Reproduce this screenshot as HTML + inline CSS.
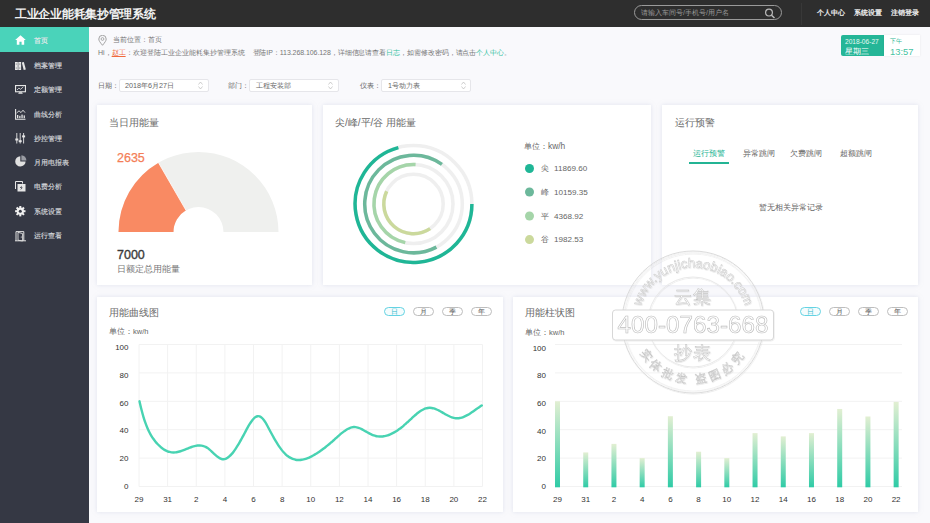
<!DOCTYPE html>
<html><head><meta charset="utf-8">
<style>
*{margin:0;padding:0;box-sizing:border-box}
html,body{width:930px;height:523px;overflow:hidden;background:#f9f9fc;font-family:"Liberation Sans",sans-serif;}
.a{position:absolute;white-space:nowrap}
#hdr{position:absolute;left:0;top:0;width:930px;height:27px;background:#2e2e2e}
#side{position:absolute;left:0;top:27px;width:89px;height:496px;background:#353844}
.card{position:absolute;background:#fff;box-shadow:0 0 4px rgba(200,205,225,0.5)}
.nav{position:absolute;left:0;width:89px;height:24px}
.nav .t{position:absolute;left:34px;top:1px;line-height:24px;font-size:7.2px;color:#d4d6da;-webkit-text-stroke:0.15px #d4d6da}
.nav svg{position:absolute;left:15px;top:7px}
</style></head><body>
<div id="hdr">
  <div class="a" style="left:15px;top:7px;font-size:12px;font-weight:bold;color:#f2f2f2;line-height:14px;letter-spacing:-0.3px">工业企业能耗集抄管理系统</div>
  <div class="a" style="left:634px;top:5px;width:148px;height:15px;border:1px solid #9a9a9a;border-radius:8px"></div>
  <div class="a" style="left:641px;top:7px;font-size:7px;line-height:11px;color:#9a9a9a">请输入车间号/手机号/用户名</div>
  <svg class="a" style="left:764px;top:8px" width="12" height="11" viewBox="0 0 12 11"><circle cx="5" cy="4.6" r="3.4" fill="none" stroke="#bbb" stroke-width="1.2"/><path d="M7.5 7.2 L10.5 10" stroke="#bbb" stroke-width="1.5"/></svg>
  <div class="a" style="left:801px;top:3px;width:1px;height:22px;background:#383838"></div>
  <div class="a" style="left:816.5px;top:7px;font-size:7.2px;line-height:12px;color:#f4f4f4;-webkit-text-stroke:0.25px #f4f4f4">个人中心</div>
  <div class="a" style="left:853.5px;top:7px;font-size:7.2px;line-height:12px;color:#f4f4f4;-webkit-text-stroke:0.25px #f4f4f4">系统设置</div>
  <div class="a" style="left:890.5px;top:7px;font-size:7.2px;line-height:12px;color:#f4f4f4;-webkit-text-stroke:0.25px #f4f4f4">注销登录</div>
</div>
<div id="side">
  <div class="nav" style="top:0;height:25px;background:#4ad3ba"><svg style="left:15px;top:8px" width="11" height="10" viewBox="0 0 11 10"><path d="M5.5 0.3 L10.8 5 L9.2 5 L9.2 9.8 L6.6 9.8 L6.6 6.8 L4.4 6.8 L4.4 9.8 L1.8 9.8 L1.8 5 L0.2 5 Z" fill="#fff"/></svg><div class="t" style="top:1px;line-height:25px;color:#fff">首页</div></div>
  <div class="nav" style="top:26px"><svg style="top:8.5px" width="11" height="8" viewBox="0 0 11 8"><rect x="0" y="0" width="2.8" height="8" fill="#e6e6e6"/><rect x="3.3" y="0" width="2.8" height="8" fill="#e6e6e6"/><path d="M6.8 0.5 L8.9 0 L10.8 7.4 L8.7 8 Z" fill="#e6e6e6"/><rect x="0.7" y="1.6" width="1.4" height="0.9" fill="#8a8c92"/><rect x="4" y="1.6" width="1.4" height="0.9" fill="#8a8c92"/><rect x="0.7" y="5.6" width="1.4" height="0.9" fill="#8a8c92"/><rect x="4" y="5.6" width="1.4" height="0.9" fill="#8a8c92"/></svg><div class="t">档案管理</div></div>
  <div class="nav" style="top:50px"><svg style="top:8px" width="11" height="9" viewBox="0 0 11 9"><rect x="0.55" y="0.55" width="9.9" height="6.2" fill="none" stroke="#e6e6e6" stroke-width="1.1"/><path d="M2 5 L3.9 3.1 L5.6 4.3 L8.4 1.8" fill="none" stroke="#e6e6e6" stroke-width="0.8"/><path d="M3.2 8.8 L7.8 8.8 L7 7.2 L4 7.2 Z" fill="#e6e6e6"/></svg><div class="t">定额管理</div></div>
  <div class="nav" style="top:75px"><svg style="top:7px" width="11" height="11" viewBox="0 0 11 11"><path d="M0.6 0 L0.6 10.3 L10.5 10.3" fill="none" stroke="#e6e6e6" stroke-width="1.1"/><path d="M1.6 4 L4 1.8 L6 3.6 L8 1.2 L10 3.6" fill="none" stroke="#e6e6e6" stroke-width="0.9"/><rect x="2" y="6" width="1.3" height="3.2" fill="#e6e6e6"/><rect x="4.2" y="6.8" width="1.3" height="2.4" fill="#e6e6e6"/><rect x="6.4" y="5.6" width="1.3" height="3.6" fill="#e6e6e6"/><rect x="8.6" y="6.4" width="1.3" height="2.8" fill="#e6e6e6"/></svg><div class="t">曲线分析</div></div>
  <div class="nav" style="top:99px"><svg style="top:7px" width="11" height="11" viewBox="0 0 11 11"><path d="M1.8 0 V10.5 M5.2 0 V10.5 M8.6 0 V10.5" stroke="#e6e6e6" stroke-width="0.9"/><rect x="0.3" y="5.5" width="3" height="2" fill="#e6e6e6"/><rect x="3.7" y="7.2" width="3" height="2" fill="#e6e6e6"/><rect x="7.1" y="2.4" width="3" height="2" fill="#e6e6e6"/></svg><div class="t">抄控管理</div></div>
  <div class="nav" style="top:123px"><svg style="top:5px" width="12" height="13" viewBox="0 0 12 13"><path d="M5.3 1.2 A5.2 5.2 0 1 0 10.6 6.5 L5.3 6.5 Z" fill="#e0e0e0"/><path d="M6.4 0.2 A5.2 5.2 0 0 1 11.4 5.4 L6.4 5.4 Z" fill="#9a9ca3"/></svg><div class="t">月用电报表</div></div>
  <div class="nav" style="top:147px"><svg style="top:7px" width="11" height="11" viewBox="0 0 11 11"><path d="M0.5 8 V0.5 H7.5 V2.5" fill="none" stroke="#e6e6e6" stroke-width="1"/><rect x="2.5" y="3" width="8" height="7.5" fill="#e6e6e6"/><path d="M7 4.5 L4.8 7 L6.3 7 L5.3 9.3 L7.8 6.4 L6.3 6.4 Z" fill="#353844"/></svg><div class="t">电费分析</div></div>
  <div class="nav" style="top:172px"><svg style="top:7px" width="11" height="11" viewBox="0 0 11 11"><g fill="#f0f0f0"><circle cx="5.3" cy="5.2" r="3.6"/><g id="teeth"><rect x="4.3" y="0" width="2" height="10.4"/><rect x="4.3" y="0" width="2" height="10.4" transform="rotate(45 5.3 5.2)"/><rect x="4.3" y="0" width="2" height="10.4" transform="rotate(90 5.3 5.2)"/><rect x="4.3" y="0" width="2" height="10.4" transform="rotate(135 5.3 5.2)"/></g></g><circle cx="5.3" cy="5.2" r="1.5" fill="#353844"/></svg><div class="t">系统设置</div></div>
  <div class="nav" style="top:196px"><svg style="top:8px" width="12" height="11" viewBox="0 0 12 11"><path d="M1 9.8 V0.6 H8.8 V9.8 M0 9.8 H11" fill="none" stroke="#e0e0e0" stroke-width="1"/><path d="M3 1.3 L7.6 2.6 V10 L3 9.2 Z" fill="none" stroke="#e0e0e0" stroke-width="0.9"/><circle cx="6.3" cy="6" r="0.6" fill="#e0e0e0"/></svg><div class="t">运行查看</div></div>
</div>

<!-- breadcrumb -->
<svg class="a" style="left:97.5px;top:34.5px" width="9" height="11" viewBox="0 0 9 11"><path d="M4.5 10.3 C2 7.3 0.8 5.6 0.8 4 A3.7 3.7 0 0 1 8.2 4 C8.2 5.6 7 7.3 4.5 10.3 Z" fill="none" stroke="#999" stroke-width="0.9"/><circle cx="4.5" cy="4" r="1.4" fill="none" stroke="#999" stroke-width="0.8"/></svg>
<div class="a" style="left:113px;top:35px;font-size:7px;line-height:10px;color:#777">当前位置：首页</div>
<div id="w1" class="a" style="left:98px;top:48px;font-size:7px;line-height:10px;color:#777">Hi，<span style="color:#f06a3c;text-decoration:underline">赵工</span>：欢迎登陆工业企业能耗集抄管理系统</div>
<div id="w2" class="a" style="left:252.5px;top:48px;letter-spacing:-0.07px;font-size:7px;line-height:10px;color:#777">登陆IP：113.268.106.128，详细信息请查看<span style="color:#2fc0a0">日志</span>，如需修改密码，请点击<span style="color:#2fc0a0">个人中心</span>。</div>
<!-- date widget -->
<div class="a" style="left:841px;top:35px;width:43px;height:21px;background:#25b697;border-radius:2px 0 0 2px"></div>
<div class="a" style="left:884px;top:35px;width:36px;height:21px;background:#fff;box-shadow:0 0 2px rgba(0,0,0,0.08)"></div>
<div class="a" style="left:845px;top:37px;font-size:6.6px;line-height:9px;color:#e8f8f3">2018-06-27</div>
<div class="a" style="left:845px;top:45px;font-size:8.4px;line-height:12px;color:#fff">星期三</div>
<div class="a" style="left:890px;top:37px;font-size:6px;line-height:9px;color:#2fb896">下午</div>
<div class="a" style="left:890px;top:45.5px;font-size:9.4px;line-height:12px;color:#45c2a3">13:57</div>
<!-- filters -->
<div class="a" style="left:98px;top:80px;font-size:7px;line-height:11px;color:#666">日期：</div>
<div class="a" style="left:119px;top:79px;width:90px;height:13px;background:#fff;border:1px solid #e6e6ea;border-radius:2px"></div>
<div class="a" style="left:125px;top:80px;font-size:7.2px;line-height:11px;color:#666">2018年6月27日</div>
<div class="a" style="left:228px;top:80px;font-size:7px;line-height:11px;color:#666">部门：</div>
<div class="a" style="left:249px;top:79px;width:90px;height:13px;background:#fff;border:1px solid #e6e6ea;border-radius:2px"></div>
<div class="a" style="left:256px;top:80px;font-size:7.2px;line-height:11px;color:#666">工程安装部</div>
<div class="a" style="left:360px;top:80px;font-size:7px;line-height:11px;color:#666">仪表：</div>
<div class="a" style="left:381px;top:79px;width:90px;height:13px;background:#fff;border:1px solid #e6e6ea;border-radius:2px"></div>
<div class="a" style="left:388px;top:80px;font-size:7.2px;line-height:11px;color:#666">1号动力表</div>
<svg class="a" style="left:198px;top:81px" width="5" height="9" viewBox="0 0 5 9"><path d="M0.5 3.5 L2.5 1 L4.5 3.5 M0.5 5.5 L2.5 8 L4.5 5.5" fill="none" stroke="#bbb" stroke-width="0.7"/></svg>
<svg class="a" style="left:328px;top:81px" width="5" height="9" viewBox="0 0 5 9"><path d="M0.5 3.5 L2.5 1 L4.5 3.5 M0.5 5.5 L2.5 8 L4.5 5.5" fill="none" stroke="#bbb" stroke-width="0.7"/></svg>
<svg class="a" style="left:461px;top:81px" width="5" height="9" viewBox="0 0 5 9"><path d="M0.5 3.5 L2.5 1 L4.5 3.5 M0.5 5.5 L2.5 8 L4.5 5.5" fill="none" stroke="#bbb" stroke-width="0.7"/></svg>
<!-- cards -->
<div class="card" style="left:97px;top:105px;width:215px;height:180px"></div>
<div class="card" style="left:323px;top:105px;width:328px;height:180px"></div>
<div class="card" style="left:662px;top:105px;width:256px;height:180px"></div>
<div class="card" style="left:97px;top:297px;width:406px;height:215px"></div>
<div class="card" style="left:513px;top:297px;width:405px;height:215px"></div>
<!--TEXT-->
<div class="a" style="left:109px;top:116px;font-size:10px;line-height:14px;color:#6a6a6a">当日用能量</div>
<div class="a" style="left:117px;top:150px;font-size:12.5px;line-height:16px;color:#f47e57;-webkit-text-stroke:0.25px #f47e57">2635</div>
<div class="a" style="left:117px;top:248px;font-size:12.5px;line-height:15px;color:#3a3a3a;-webkit-text-stroke:0.35px #3a3a3a">7000</div>
<div class="a" style="left:117px;top:263px;font-size:9px;line-height:12px;color:#777">日额定总用能量</div>
<div class="a" style="left:335px;top:116px;font-size:10px;line-height:14px;color:#6a6a6a">尖/峰/平/谷 用能量</div>
<div class="a" style="left:524px;top:141px;font-size:8.4px;line-height:11px;color:#666">单位：kw/h</div>
<div class="a" style="left:540.5px;top:163px;font-size:8.4px;line-height:11px;color:#666">尖</div><div class="a" style="left:554px;top:163px;font-size:8.1px;line-height:11px;color:#666">11869.60</div>
<div class="a" style="left:540.5px;top:187px;font-size:8.4px;line-height:11px;color:#666">峰</div><div class="a" style="left:554px;top:187px;font-size:8.1px;line-height:11px;color:#666">10159.35</div>
<div class="a" style="left:540.5px;top:211px;font-size:8.4px;line-height:11px;color:#666">平</div><div class="a" style="left:554px;top:211px;font-size:8.1px;line-height:11px;color:#666">4368.92</div>
<div class="a" style="left:540.5px;top:234px;font-size:8.4px;line-height:11px;color:#666">谷</div><div class="a" style="left:554px;top:234px;font-size:8.1px;line-height:11px;color:#666">1982.53</div>
<div class="a" style="left:675px;top:116px;font-size:10px;line-height:14px;color:#6a6a6a">运行预警</div>
<div class="a" style="left:693px;top:148px;font-size:8px;line-height:11px;color:#23b494">运行预警</div>
<div class="a" style="left:689px;top:162px;width:40px;height:2px;background:#23b494"></div>
<div class="a" style="left:743px;top:148px;font-size:8px;line-height:11px;color:#666">异常跳闸</div>
<div class="a" style="left:790px;top:148px;font-size:8px;line-height:11px;color:#666">欠费跳闸</div>
<div class="a" style="left:840px;top:148px;font-size:8px;line-height:11px;color:#666">超额跳闸</div>
<div class="a" style="left:759px;top:202px;font-size:8px;line-height:11px;color:#666">暂无相关异常记录</div>
<div class="a" style="left:109px;top:306px;font-size:10px;line-height:14px;color:#6a6a6a">用能曲线图</div>
<div class="a" style="left:109px;top:327px;font-size:7.5px;line-height:10px;color:#666">单位：kw/h</div>
<div class="a" style="left:525px;top:306px;font-size:10px;line-height:14px;color:#6a6a6a">用能柱状图</div>
<div class="a" style="left:525px;top:328px;font-size:7.5px;line-height:10px;color:#666">单位：kw/h</div>
<div class="a" style="left:384px;top:307px;width:21px;height:9px;border-radius:5px;border:1px solid #64d3e3;color:#30b9cc;background:#f4fcfd;font-size:6.5px;line-height:7.5px;text-align:center">日</div>
<div class="a" style="left:413px;top:307px;width:21px;height:9px;border-radius:5px;border:1px solid #bdbdbd;color:#555;background:#fff;font-size:6.5px;line-height:7.5px;text-align:center">月</div>
<div class="a" style="left:442px;top:307px;width:21px;height:9px;border-radius:5px;border:1px solid #bdbdbd;color:#555;background:#fff;font-size:6.5px;line-height:7.5px;text-align:center">季</div>
<div class="a" style="left:471px;top:307px;width:21px;height:9px;border-radius:5px;border:1px solid #bdbdbd;color:#555;background:#fff;font-size:6.5px;line-height:7.5px;text-align:center">年</div>
<div class="a" style="left:800px;top:307px;width:21px;height:9px;border-radius:5px;border:1px solid #64d3e3;color:#30b9cc;background:#f4fcfd;font-size:6.5px;line-height:7.5px;text-align:center">日</div>
<div class="a" style="left:829px;top:307px;width:21px;height:9px;border-radius:5px;border:1px solid #bdbdbd;color:#555;background:#fff;font-size:6.5px;line-height:7.5px;text-align:center">月</div>
<div class="a" style="left:858px;top:307px;width:21px;height:9px;border-radius:5px;border:1px solid #bdbdbd;color:#555;background:#fff;font-size:6.5px;line-height:7.5px;text-align:center">季</div>
<div class="a" style="left:887px;top:307px;width:21px;height:9px;border-radius:5px;border:1px solid #bdbdbd;color:#555;background:#fff;font-size:6.5px;line-height:7.5px;text-align:center">年</div>
<!--/TEXT-->
<!--CHARTS--><svg class="a" style="left:0;top:0" width="930" height="523" viewBox="0 0 930 523"><defs><linearGradient id="bg" x1="0" y1="1" x2="0" y2="0"><stop offset="0" stop-color="#2fcba6"/><stop offset="1" stop-color="#e2efd2"/></linearGradient></defs><path d="M118.5 232 A80 80 0 0 1 278.5 232 L223.5 232 A25 25 0 0 0 173.5 232 Z" fill="#eff0ee"/><path d="M118.5 232 A80 80 0 0 1 158.50 162.72 L186.00 210.35 A25 25 0 0 0 173.5 232 Z" fill="#f98a63"/><path d="M158.50 162.72 L186.00 210.35" stroke="#fff" stroke-width="0.8"/><circle cx="413.5" cy="204" r="58.4" fill="none" stroke="#efefef" stroke-width="3.5"/><path d="M471.90 204.00 A58.4 58.4 0 1 1 398.38 147.59" fill="none" stroke="#1fb696" stroke-width="3.5"/><circle cx="413.5" cy="204" r="48.8" fill="none" stroke="#efefef" stroke-width="3.5"/><path d="M436.41 247.09 A48.8 48.8 0 1 1 441.91 164.32" fill="none" stroke="#6cb89b" stroke-width="3.5"/><circle cx="413.5" cy="204" r="39.5" fill="none" stroke="#efefef" stroke-width="3.5"/><path d="M405.29 242.64 A39.5 39.5 0 0 1 415.57 164.55" fill="none" stroke="#a5d5a9" stroke-width="3.5"/><circle cx="413.5" cy="204" r="29.7" fill="none" stroke="#efefef" stroke-width="3.5"/><path d="M430.11 228.62 A29.7 29.7 0 0 1 386.69 191.21" fill="none" stroke="#cbd99c" stroke-width="3.5"/><circle cx="529.5" cy="168.5" r="4.5" fill="#1fb696"/><circle cx="529.5" cy="192" r="4.5" fill="#6cb89b"/><circle cx="529.5" cy="216" r="4.5" fill="#a5d5a9"/><circle cx="529.5" cy="239.6" r="4.5" fill="#cbd99c"/><line x1="139.00" y1="344.5" x2="139.00" y2="486.5" stroke="#f2f2f2" stroke-width="1"/><line x1="167.62" y1="344.5" x2="167.62" y2="486.5" stroke="#f2f2f2" stroke-width="1"/><line x1="196.25" y1="344.5" x2="196.25" y2="486.5" stroke="#f2f2f2" stroke-width="1"/><line x1="224.88" y1="344.5" x2="224.88" y2="486.5" stroke="#f2f2f2" stroke-width="1"/><line x1="253.50" y1="344.5" x2="253.50" y2="486.5" stroke="#f2f2f2" stroke-width="1"/><line x1="282.12" y1="344.5" x2="282.12" y2="486.5" stroke="#f2f2f2" stroke-width="1"/><line x1="310.75" y1="344.5" x2="310.75" y2="486.5" stroke="#f2f2f2" stroke-width="1"/><line x1="339.38" y1="344.5" x2="339.38" y2="486.5" stroke="#f2f2f2" stroke-width="1"/><line x1="368.00" y1="344.5" x2="368.00" y2="486.5" stroke="#f2f2f2" stroke-width="1"/><line x1="396.62" y1="344.5" x2="396.62" y2="486.5" stroke="#f2f2f2" stroke-width="1"/><line x1="425.25" y1="344.5" x2="425.25" y2="486.5" stroke="#f2f2f2" stroke-width="1"/><line x1="453.88" y1="344.5" x2="453.88" y2="486.5" stroke="#f2f2f2" stroke-width="1"/><line x1="482.50" y1="344.5" x2="482.50" y2="486.5" stroke="#f2f2f2" stroke-width="1"/><line x1="139.0" y1="344.50" x2="482.5" y2="344.50" stroke="#f2f2f2" stroke-width="1"/><line x1="139.0" y1="372.90" x2="482.5" y2="372.90" stroke="#f2f2f2" stroke-width="1"/><line x1="139.0" y1="401.30" x2="482.5" y2="401.30" stroke="#f2f2f2" stroke-width="1"/><line x1="139.0" y1="429.70" x2="482.5" y2="429.70" stroke="#f2f2f2" stroke-width="1"/><line x1="139.0" y1="458.10" x2="482.5" y2="458.10" stroke="#f2f2f2" stroke-width="1"/><line x1="139.0" y1="486.50" x2="482.5" y2="486.50" stroke="#f2f2f2" stroke-width="1"/><text x="139.00" y="502" font-family="Liberation Sans" font-size="8" fill="#333" text-anchor="middle">29</text><text x="167.62" y="502" font-family="Liberation Sans" font-size="8" fill="#333" text-anchor="middle">31</text><text x="196.25" y="502" font-family="Liberation Sans" font-size="8" fill="#333" text-anchor="middle">2</text><text x="224.88" y="502" font-family="Liberation Sans" font-size="8" fill="#333" text-anchor="middle">4</text><text x="253.50" y="502" font-family="Liberation Sans" font-size="8" fill="#333" text-anchor="middle">6</text><text x="282.12" y="502" font-family="Liberation Sans" font-size="8" fill="#333" text-anchor="middle">8</text><text x="310.75" y="502" font-family="Liberation Sans" font-size="8" fill="#333" text-anchor="middle">10</text><text x="339.38" y="502" font-family="Liberation Sans" font-size="8" fill="#333" text-anchor="middle">12</text><text x="368.00" y="502" font-family="Liberation Sans" font-size="8" fill="#333" text-anchor="middle">14</text><text x="396.62" y="502" font-family="Liberation Sans" font-size="8" fill="#333" text-anchor="middle">16</text><text x="425.25" y="502" font-family="Liberation Sans" font-size="8" fill="#333" text-anchor="middle">18</text><text x="453.88" y="502" font-family="Liberation Sans" font-size="8" fill="#333" text-anchor="middle">20</text><text x="482.50" y="502" font-family="Liberation Sans" font-size="8" fill="#333" text-anchor="middle">22</text><text x="128.5" y="350.30" font-family="Liberation Sans" font-size="8" fill="#333" text-anchor="end">100</text><text x="128.5" y="378.00" font-family="Liberation Sans" font-size="8" fill="#333" text-anchor="end">80</text><text x="128.5" y="405.70" font-family="Liberation Sans" font-size="8" fill="#333" text-anchor="end">60</text><text x="128.5" y="433.40" font-family="Liberation Sans" font-size="8" fill="#333" text-anchor="end">40</text><text x="128.5" y="461.10" font-family="Liberation Sans" font-size="8" fill="#333" text-anchor="end">20</text><text x="128.5" y="488.80" font-family="Liberation Sans" font-size="8" fill="#333" text-anchor="end">0</text><path d="M139.5 401.31 C139.83 402.73 140.83 407.20 141.5 409.82 C142.17 412.44 142.83 414.83 143.5 417.05 C144.17 419.27 144.84 421.27 145.51 423.14 C146.18 425.00 146.84 426.68 147.51 428.24 C148.18 429.80 148.84 431.19 149.51 432.49 C150.18 433.79 150.84 434.96 151.51 436.05 C152.18 437.14 152.84 438.12 153.51 439.06 C154.18 440.00 154.84 440.84 155.51 441.66 C156.18 442.48 156.85 443.24 157.52 443.96 C158.19 444.68 158.85 445.35 159.52 445.97 C160.19 446.60 160.85 447.18 161.52 447.71 C162.19 448.24 162.85 448.72 163.52 449.16 C164.19 449.60 164.85 450.00 165.52 450.35 C166.19 450.70 166.85 451.01 167.52 451.27 C168.19 451.53 168.86 451.75 169.53 451.92 C170.20 452.10 170.86 452.23 171.53 452.32 C172.20 452.41 172.86 452.45 173.53 452.46 C174.20 452.46 174.86 452.42 175.53 452.35 C176.20 452.28 176.86 452.16 177.53 452.02 C178.20 451.88 178.87 451.71 179.54 451.52 C180.21 451.33 180.87 451.11 181.54 450.88 C182.21 450.65 182.87 450.39 183.54 450.14 C184.21 449.88 184.87 449.62 185.54 449.35 C186.21 449.08 186.87 448.80 187.54 448.53 C188.21 448.26 188.87 448.00 189.54 447.74 C190.21 447.49 190.88 447.23 191.55 447.0 C192.22 446.77 192.88 446.56 193.55 446.37 C194.22 446.18 194.88 446.00 195.55 445.87 C196.22 445.74 196.88 445.63 197.55 445.56 C198.22 445.49 198.88 445.45 199.55 445.46 C200.22 445.47 200.88 445.52 201.55 445.62 C202.22 445.72 202.89 445.87 203.56 446.08 C204.23 446.29 204.89 446.55 205.56 446.88 C206.23 447.21 206.89 447.61 207.56 448.06 C208.23 448.51 208.89 449.04 209.56 449.6 C210.23 450.16 210.89 450.78 211.56 451.4 C212.23 452.02 212.89 452.68 213.56 453.3 C214.23 453.93 214.90 454.56 215.57 455.15 C216.24 455.74 216.90 456.32 217.57 456.82 C218.24 457.32 218.90 457.79 219.57 458.16 C220.24 458.53 220.90 458.84 221.57 459.02 C222.24 459.20 222.90 459.29 223.57 459.26 C224.24 459.23 224.91 459.08 225.58 458.84 C226.25 458.60 226.91 458.24 227.58 457.8 C228.25 457.36 228.91 456.83 229.58 456.22 C230.25 455.61 230.91 454.91 231.58 454.15 C232.25 453.39 232.91 452.56 233.58 451.67 C234.25 450.78 234.91 449.83 235.58 448.83 C236.25 447.83 236.92 446.77 237.59 445.69 C238.26 444.61 238.92 443.48 239.59 442.33 C240.26 441.18 240.92 439.98 241.59 438.77 C242.26 437.56 242.92 436.32 243.59 435.08 C244.26 433.84 244.92 432.56 245.59 431.32 C246.26 430.08 246.92 428.82 247.59 427.63 C248.26 426.44 248.93 425.28 249.6 424.2 C250.27 423.12 250.93 422.08 251.6 421.17 C252.27 420.26 252.93 419.41 253.6 418.72 C254.27 418.03 254.93 417.43 255.6 417.01 C256.27 416.59 256.93 416.30 257.6 416.2 C258.27 416.10 258.94 416.19 259.61 416.43 C260.28 416.67 260.94 417.09 261.61 417.65 C262.28 418.21 262.94 418.93 263.61 419.77 C264.28 420.61 264.94 421.62 265.61 422.69 C266.28 423.76 266.94 424.99 267.61 426.21 C268.28 427.43 268.94 428.75 269.61 430.01 C270.28 431.27 270.95 432.56 271.62 433.8 C272.29 435.04 272.95 436.25 273.62 437.44 C274.29 438.62 274.95 439.79 275.62 440.91 C276.29 442.03 276.95 443.12 277.62 444.16 C278.29 445.20 278.95 446.21 279.62 447.16 C280.29 448.11 280.95 449.03 281.62 449.88 C282.29 450.73 282.96 451.52 283.63 452.26 C284.30 453.00 284.96 453.67 285.63 454.29 C286.30 454.91 286.96 455.48 287.63 455.99 C288.30 456.50 288.96 456.96 289.63 457.36 C290.30 457.76 290.96 458.11 291.63 458.42 C292.30 458.73 292.97 458.99 293.64 459.2 C294.31 459.41 294.97 459.58 295.64 459.71 C296.31 459.84 296.97 459.91 297.64 459.96 C298.31 460.01 298.97 460.02 299.64 459.99 C300.31 459.96 300.97 459.89 301.64 459.8 C302.31 459.71 302.97 459.58 303.64 459.42 C304.31 459.26 304.98 459.08 305.65 458.87 C306.32 458.66 306.98 458.41 307.65 458.15 C308.32 457.89 308.98 457.60 309.65 457.29 C310.32 456.98 310.98 456.65 311.65 456.31 C312.32 455.97 312.98 455.61 313.65 455.23 C314.32 454.86 314.98 454.47 315.65 454.06 C316.32 453.65 316.99 453.23 317.66 452.8 C318.33 452.37 318.99 451.92 319.66 451.46 C320.33 451.00 320.99 450.52 321.66 450.04 C322.33 449.56 322.99 449.07 323.66 448.56 C324.33 448.05 324.99 447.53 325.66 447.0 C326.33 446.47 326.99 445.94 327.66 445.39 C328.33 444.84 329.00 444.29 329.67 443.73 C330.34 443.17 331.00 442.59 331.67 442.01 C332.34 441.43 333.00 440.84 333.67 440.25 C334.34 439.66 335.00 439.05 335.67 438.45 C336.34 437.85 337.00 437.24 337.67 436.64 C338.34 436.04 339.01 435.44 339.68 434.86 C340.35 434.28 341.01 433.72 341.68 433.17 C342.35 432.62 343.01 432.09 343.68 431.59 C344.35 431.09 345.01 430.62 345.68 430.18 C346.35 429.75 347.01 429.34 347.68 428.98 C348.35 428.62 349.01 428.30 349.68 428.03 C350.35 427.76 351.02 427.53 351.69 427.37 C352.36 427.21 353.02 427.09 353.69 427.05 C354.36 427.01 355.02 427.03 355.69 427.11 C356.36 427.19 357.02 427.34 357.69 427.53 C358.36 427.72 359.02 427.97 359.69 428.24 C360.36 428.51 361.02 428.84 361.69 429.17 C362.36 429.50 363.03 429.87 363.7 430.24 C364.37 430.61 365.03 431.00 365.7 431.39 C366.37 431.78 367.03 432.18 367.7 432.56 C368.37 432.94 369.03 433.31 369.7 433.66 C370.37 434.01 371.03 434.35 371.7 434.64 C372.37 434.93 373.04 435.19 373.71 435.41 C374.38 435.63 375.04 435.83 375.71 435.98 C376.38 436.13 377.04 436.25 377.71 436.34 C378.38 436.42 379.04 436.47 379.71 436.49 C380.38 436.51 381.04 436.50 381.71 436.46 C382.38 436.42 383.04 436.34 383.71 436.24 C384.38 436.14 385.05 436.00 385.72 435.84 C386.39 435.68 387.05 435.49 387.72 435.28 C388.39 435.06 389.05 434.82 389.72 434.55 C390.39 434.28 391.05 433.99 391.72 433.67 C392.39 433.35 393.05 433.01 393.72 432.64 C394.39 432.27 395.05 431.88 395.72 431.47 C396.39 431.06 397.06 430.62 397.73 430.17 C398.40 429.72 399.06 429.24 399.73 428.75 C400.40 428.26 401.06 427.74 401.73 427.21 C402.40 426.68 403.06 426.13 403.73 425.56 C404.40 424.99 405.06 424.40 405.73 423.81 C406.40 423.22 407.07 422.60 407.74 421.99 C408.41 421.38 409.07 420.75 409.74 420.13 C410.41 419.51 411.07 418.88 411.74 418.27 C412.41 417.66 413.07 417.04 413.74 416.45 C414.41 415.86 415.07 415.27 415.74 414.71 C416.41 414.15 417.07 413.59 417.74 413.07 C418.41 412.55 419.08 412.06 419.75 411.6 C420.42 411.14 421.08 410.70 421.75 410.31 C422.42 409.92 423.08 409.56 423.75 409.25 C424.42 408.94 425.08 408.66 425.75 408.45 C426.42 408.24 427.08 408.07 427.75 407.96 C428.42 407.85 429.08 407.80 429.75 407.8 C430.42 407.80 431.09 407.87 431.76 407.98 C432.43 408.09 433.09 408.26 433.76 408.45 C434.43 408.64 435.09 408.88 435.76 409.14 C436.43 409.40 437.09 409.71 437.76 410.03 C438.43 410.35 439.09 410.70 439.76 411.05 C440.43 411.40 441.09 411.77 441.76 412.15 C442.43 412.52 443.10 412.92 443.77 413.3 C444.44 413.68 445.10 414.07 445.77 414.44 C446.44 414.81 447.10 415.17 447.77 415.51 C448.44 415.85 449.10 416.18 449.77 416.48 C450.44 416.78 451.10 417.06 451.77 417.29 C452.44 417.53 453.11 417.73 453.78 417.89 C454.45 418.05 455.11 418.17 455.78 418.24 C456.45 418.31 457.11 418.32 457.78 418.29 C458.45 418.26 459.11 418.17 459.78 418.05 C460.45 417.93 461.11 417.76 461.78 417.56 C462.45 417.36 463.11 417.11 463.78 416.84 C464.45 416.57 465.12 416.26 465.79 415.93 C466.46 415.60 467.12 415.24 467.79 414.86 C468.46 414.48 469.12 414.07 469.79 413.65 C470.46 413.23 471.12 412.80 471.79 412.35 C472.46 411.90 473.12 411.44 473.79 410.97 C474.46 410.50 475.12 410.03 475.79 409.56 C476.46 409.09 477.13 408.61 477.8 408.14 C478.47 407.67 479.13 407.20 479.8 406.74 C480.47 406.28 481.47 405.62 481.8 405.4" fill="none" stroke="#48d3b2" stroke-width="2.4" stroke-linecap="round"/><line x1="555" y1="344.50" x2="902" y2="344.50" stroke="#f2f2f2" stroke-width="1"/><line x1="555" y1="372.90" x2="902" y2="372.90" stroke="#f2f2f2" stroke-width="1"/><line x1="555" y1="401.30" x2="902" y2="401.30" stroke="#f2f2f2" stroke-width="1"/><line x1="555" y1="429.70" x2="902" y2="429.70" stroke="#f2f2f2" stroke-width="1"/><line x1="555" y1="458.10" x2="902" y2="458.10" stroke="#f2f2f2" stroke-width="1"/><line x1="555" y1="486.50" x2="902" y2="486.50" stroke="#f2f2f2" stroke-width="1"/><rect x="555.00" y="401.30" width="5" height="86.00" fill="url(#bg)"/><text x="557.50" y="502" font-family="Liberation Sans" font-size="8" fill="#333" text-anchor="middle">29</text><rect x="583.22" y="452.42" width="5" height="34.88" fill="url(#bg)"/><text x="585.72" y="502" font-family="Liberation Sans" font-size="8" fill="#333" text-anchor="middle">31</text><rect x="611.44" y="443.90" width="5" height="43.40" fill="url(#bg)"/><text x="613.94" y="502" font-family="Liberation Sans" font-size="8" fill="#333" text-anchor="middle">2</text><rect x="639.66" y="458.10" width="5" height="29.20" fill="url(#bg)"/><text x="642.16" y="502" font-family="Liberation Sans" font-size="8" fill="#333" text-anchor="middle">4</text><rect x="667.88" y="416.21" width="5" height="71.09" fill="url(#bg)"/><text x="670.38" y="502" font-family="Liberation Sans" font-size="8" fill="#333" text-anchor="middle">6</text><rect x="696.10" y="451.71" width="5" height="35.59" fill="url(#bg)"/><text x="698.60" y="502" font-family="Liberation Sans" font-size="8" fill="#333" text-anchor="middle">8</text><rect x="724.32" y="458.10" width="5" height="29.20" fill="url(#bg)"/><text x="726.82" y="502" font-family="Liberation Sans" font-size="8" fill="#333" text-anchor="middle">10</text><rect x="752.54" y="433.11" width="5" height="54.19" fill="url(#bg)"/><text x="755.04" y="502" font-family="Liberation Sans" font-size="8" fill="#333" text-anchor="middle">12</text><rect x="780.76" y="436.37" width="5" height="50.93" fill="url(#bg)"/><text x="783.26" y="502" font-family="Liberation Sans" font-size="8" fill="#333" text-anchor="middle">14</text><rect x="808.98" y="433.11" width="5" height="54.19" fill="url(#bg)"/><text x="811.48" y="502" font-family="Liberation Sans" font-size="8" fill="#333" text-anchor="middle">16</text><rect x="837.20" y="408.97" width="5" height="78.33" fill="url(#bg)"/><text x="839.70" y="502" font-family="Liberation Sans" font-size="8" fill="#333" text-anchor="middle">18</text><rect x="865.42" y="416.49" width="5" height="70.81" fill="url(#bg)"/><text x="867.92" y="502" font-family="Liberation Sans" font-size="8" fill="#333" text-anchor="middle">20</text><rect x="893.64" y="401.87" width="5" height="85.43" fill="url(#bg)"/><text x="896.14" y="502" font-family="Liberation Sans" font-size="8" fill="#333" text-anchor="middle">22</text><text x="546" y="350.50" font-family="Liberation Sans" font-size="8" fill="#333" text-anchor="end">100</text><text x="546" y="378.20" font-family="Liberation Sans" font-size="8" fill="#333" text-anchor="end">80</text><text x="546" y="405.90" font-family="Liberation Sans" font-size="8" fill="#333" text-anchor="end">60</text><text x="546" y="433.60" font-family="Liberation Sans" font-size="8" fill="#333" text-anchor="end">40</text><text x="546" y="461.30" font-family="Liberation Sans" font-size="8" fill="#333" text-anchor="end">20</text><text x="546" y="489.00" font-family="Liberation Sans" font-size="8" fill="#333" text-anchor="end">0</text></svg><!--/CHARTS-->
<!--STAMP--><svg class="a" style="left:0;top:0" width="930" height="523" viewBox="0 0 930 523">
<defs>
<path id="tarc" d="M643.61 345.03 A54.5 54.5 0 1 1 742.39 345.03"/>
<path id="barc" d="M637.72 347.78 A61 61 0 0 0 748.28 347.78"/>
<filter id="emb" x="-10%" y="-10%" width="120%" height="120%"><feDropShadow dx="0.5" dy="0.8" stdDeviation="0.5" flood-color="#000" flood-opacity="0.10"/></filter>
</defs>
<g filter="url(#emb)" font-family="Liberation Sans">
<circle cx="693" cy="322" r="71" fill="none" stroke="#d8d8d8" stroke-width="0.9"/>
<circle cx="693" cy="322" r="69" fill="none" stroke="#ececec" stroke-width="0.7"/>
<circle cx="693" cy="322" r="45" fill="none" stroke="#e6e6e6" stroke-width="0.9"/>
<text font-size="13" fill="#fff" stroke="#c9c9c9" stroke-width="0.5" letter-spacing="0"><textPath href="#tarc" startOffset="50%" text-anchor="middle">www.yunjichaobiao.com</textPath></text>
<text font-size="11.5" fill="#fff" stroke="#c4c4c4" stroke-width="0.5" letter-spacing="3"><textPath href="#barc" startOffset="50%" text-anchor="middle">实体批发 盗图必究</textPath></text>
<text x="693" y="303" font-size="18" fill="#fff" stroke="#c4c4c4" stroke-width="0.5" text-anchor="middle" letter-spacing="1.5">云集</text>
<text x="693" y="359" font-size="18" fill="#fff" stroke="#c4c4c4" stroke-width="0.5" text-anchor="middle" letter-spacing="1.5">抄表</text>
<rect x="612.5" y="310" width="161" height="30" rx="3" fill="#fff" stroke="#d2d2d2" stroke-width="0.9"/>
<text x="693" y="333" font-size="24" fill="#fff" stroke="#bcbcbc" stroke-width="0.6" text-anchor="middle" textLength="151" lengthAdjust="spacingAndGlyphs">400-0763-668</text>
</g></svg><!--/STAMP-->
</body></html>
